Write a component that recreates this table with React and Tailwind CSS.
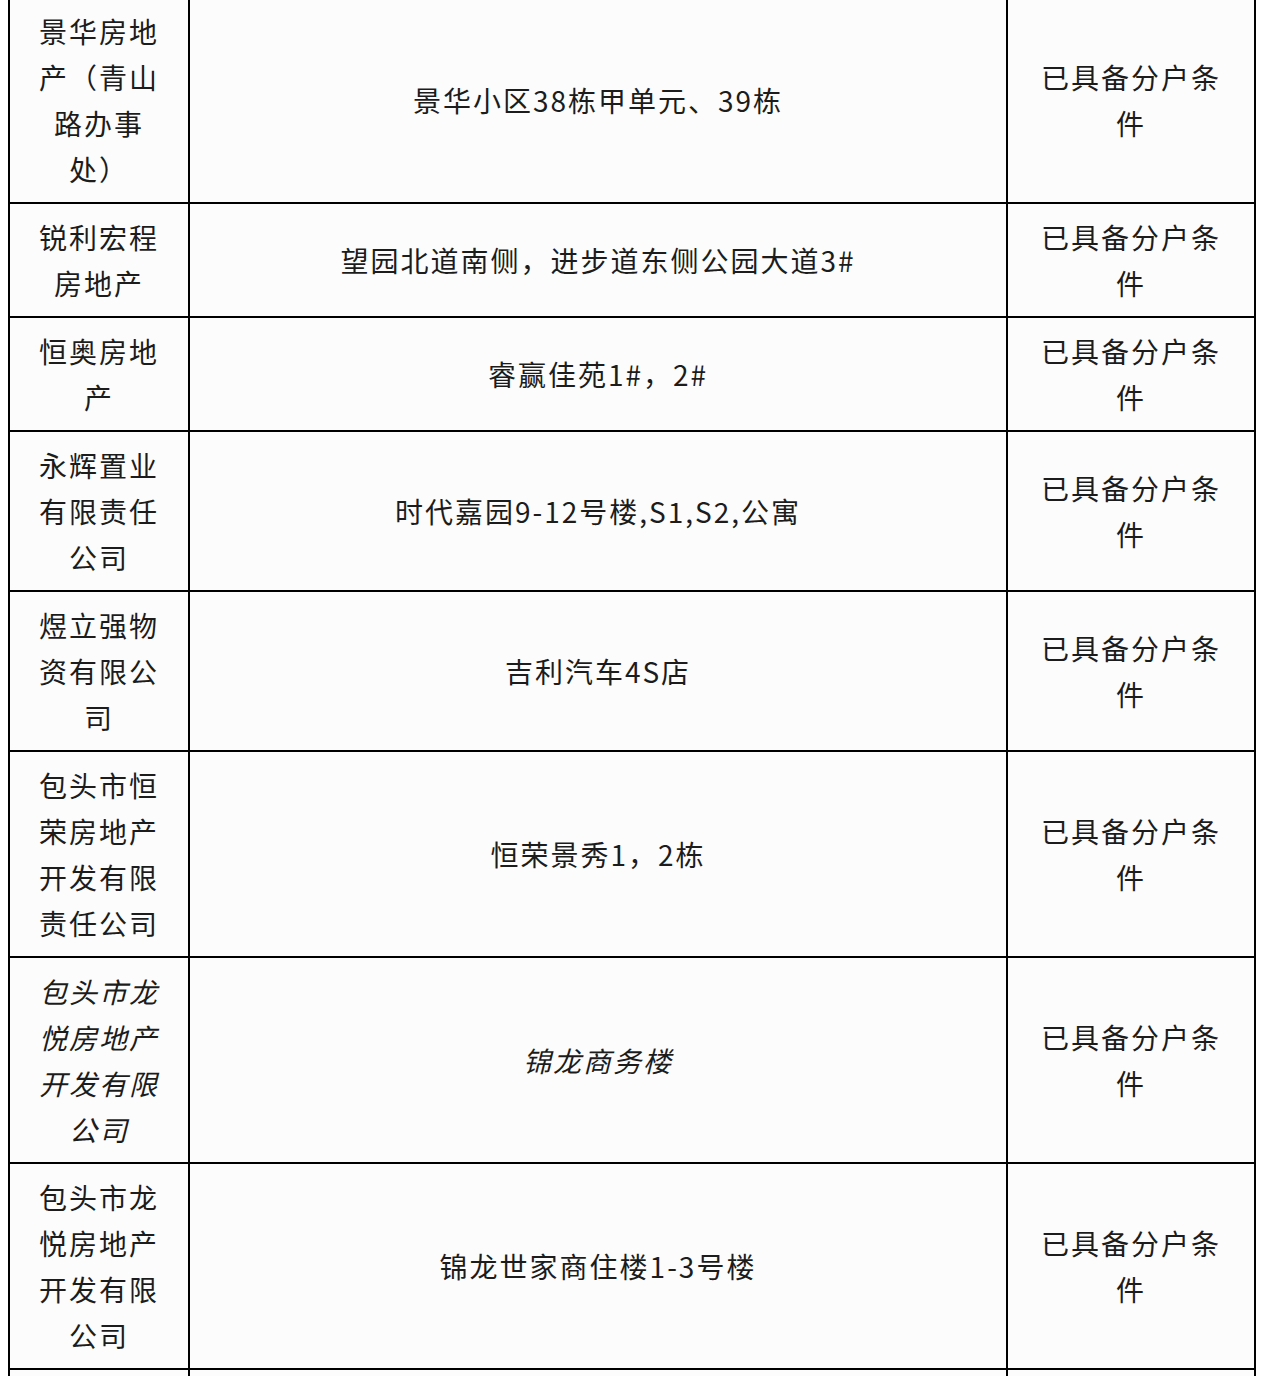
const rows = [
  {
    name: (
      <>
        景华房地
        <br />
        产（青山
        <br />
        路办事
        <br />
        处）
      </>
    ),
    place: "景华小区38栋甲单元、39栋",
  },
  { name: "锐利宏程房地产", place: "望园北道南侧，进步道东侧公园大道3#" },
  { name: "恒奥房地产", place: "睿赢佳苑1#，2#" },
  { name: "永辉置业有限责任公司", place: "时代嘉园9-12号楼,S1,S2,公寓" },
  { name: "煜立强物资有限公司", place: "吉利汽车4S店" },
  { name: "包头市恒荣房地产开发有限责任公司", place: "恒荣景秀1，2栋" },
  { name: "包头市龙悦房地产开发有限公司", place: "锦龙商务楼", italic: true },
  { name: "包头市龙悦房地产开发有限公司", place: "锦龙世家商住楼1-3号楼" },
]

export default function App() {
  return (
    <div
      className="w-[1266px] h-[1376px] overflow-hidden bg-white text-[#1c1c1c]"
      style={{ fontFamily: '"Noto Sans CJK SC", "Noto Sans", sans-serif' }}
    >
      <table className="ml-[8px] -mt-[4px] w-[1248px] table-fixed border-collapse border-2 border-black bg-[#fcfcfd] text-[28px] leading-[46px] tracking-[2px] [text-spacing-trim:space-all]">
        <colgroup>
          <col className="w-[180px]" />
          <col className="w-[818px]" />
          <col className="w-[248px]" />
        </colgroup>
        <tbody>
          {rows.map((row, i) => (
            <tr key={i}>
              <td
                className={`border-2 border-black px-4 py-[10px] text-center align-middle ${
                  row.italic ? "italic" : ""
                }`}
              >
                {row.name}
              </td>
              <td
                className={`border-2 border-black px-6 py-[10px] text-center align-middle ${
                  row.italic ? "italic" : ""
                }`}
              >
                {row.place}
              </td>
              <td className="border-2 border-black px-5 py-[10px] text-center align-middle">
                已具备分户条件
              </td>
            </tr>
          ))}
          <tr className="h-[120px]">
            <td className="border-2 border-black" />
            <td className="border-2 border-black" />
            <td className="border-2 border-black" />
          </tr>
        </tbody>
      </table>
    </div>
  )
}
